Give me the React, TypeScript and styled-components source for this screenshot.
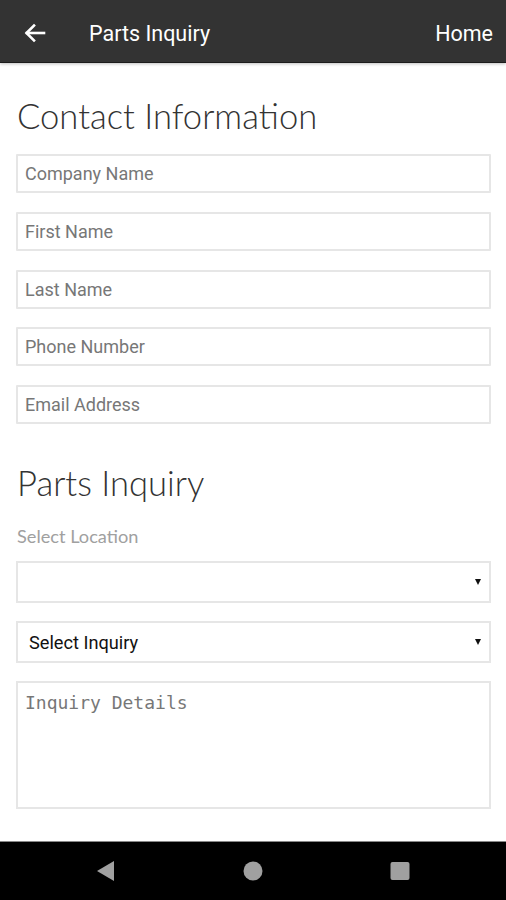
import React from "react";
import styled, { createGlobalStyle } from "styled-components";

const Global = createGlobalStyle`
  html, body { margin: 0; padding: 0; background: #fff; }
  body { width: 506px; height: 900px; overflow: hidden; font-family: Roboto, "Liberation Sans", sans-serif; }
  * { box-sizing: border-box; }
`;

const Screen = styled.div`
  width: 506px;
  height: 900px;
  display: flex;
  flex-direction: column;
  background: #fff;
`;

const TopBar = styled.header`
  height: 63px;
  flex: none;
  background: #333333;
  border-bottom: 1px solid #1c1c1c;
  box-shadow: 0 1px 3px rgba(0, 0, 0, 0.25);
  display: flex;
  align-items: center;
  padding: 4px 13px 0 22px;
  color: #fff;
  position: relative;
  z-index: 1;
`;

const BackButton = styled.span`
  display: flex;
  width: 26px;
  height: 26px;
  align-items: center;
  justify-content: center;
`;

const BarTitle = styled.span`
  margin-left: 41px;
  font-family: Roboto, sans-serif;
  font-size: 21.5px;
  font-weight: 400;
  flex: 1;
`;

const BarAction = styled.span`
  font-family: Roboto, sans-serif;
  font-size: 21.5px;
  font-weight: 400;
`;

const Content = styled.main`
  flex: 1;
  padding: 0 15px 0 16px;
  display: flex;
  flex-direction: column;
`;

const SectionTitle = styled.h1<{ $top: number }>`
  margin: ${(p) => p.$top}px 0 0 1px;
  font-family: Lato, sans-serif;
  font-weight: 300;
  font-size: 34.6px;
  line-height: 42px;
  color: #333;
`;

const FieldStack = styled.div<{ $gap: number; $top: number }>`
  display: flex;
  flex-direction: column;
  gap: ${(p) => p.$gap}px;
  margin-top: ${(p) => p.$top}px;
`;

const TextInput = styled.input`
  height: 39px;
  width: 100%;
  border: 2px solid #e6e6e6;
  border-radius: 1px;
  padding: 0 7px;
  font-family: Roboto, sans-serif;
  font-size: 18px;
  color: #333;
  background: #fff;
  outline: none;
  &::placeholder { color: #777; }
`;

const Label = styled.div`
  margin: 21px 0 0 1px;
  font-family: Lato, sans-serif;
  font-size: 18.2px;
  color: #a0a0a0;
`;

const SelectBox = styled.div`
  height: 42px;
  border: 2px solid #e6e6e6;
  display: flex;
  align-items: center;
  padding: 0 8px 0 11px;
  font-family: Roboto, sans-serif;
  font-size: 18.2px;
  color: #111;
`;

const SelectText = styled.span`
  flex: 1;
`;

const Caret = styled.span`
  width: 0;
  height: 0;
  border-left: 3.5px solid transparent;
  border-right: 3.5px solid transparent;
  border-top: 6px solid #111;
`;

const TextArea = styled.textarea`
  height: 128px;
  width: 100%;
  resize: none;
  border: 2px solid #e6e6e6;
  padding: 9px 7px;
  font-family: "DejaVu Sans Mono", "Liberation Mono", monospace;
  font-size: 18px;
  background: #fff;
  outline: none;
  &::placeholder { color: #777; }
`;

const NavBar = styled.nav`
  height: 59px;
  flex: none;
  background: #000;
  border-top: 1px solid #888;
  display: flex;
  align-items: center;
  justify-content: center;
  gap: 107px;
`;

const NavSlot = styled.span`
  width: 40px;
  display: flex;
  justify-content: center;
`;

export default function App() {
  return (
    <Screen>
      <Global />
      <TopBar>
        <BackButton>
          <svg width="22" height="20" viewBox="0 0 22 20" fill="none" stroke="#fff" strokeWidth="2.6" strokeLinecap="square">
            <path d="M20 10H3" />
            <path d="M10 2.5L2.5 10L10 17.5" />
          </svg>
        </BackButton>
        <BarTitle>Parts Inquiry</BarTitle>
        <BarAction>Home</BarAction>
      </TopBar>
      <Content>
        <SectionTitle $top={32}>Contact Information</SectionTitle>
        <FieldStack $gap={18.75} $top={17}>
          <TextInput placeholder="Company Name" />
          <TextInput placeholder="First Name" />
          <TextInput placeholder="Last Name" />
          <TextInput placeholder="Phone Number" />
          <TextInput placeholder="Email Address" />
        </FieldStack>
        <SectionTitle $top={38}>Parts Inquiry</SectionTitle>
        <Label>Select Location</Label>
        <FieldStack $gap={18} $top={14}>
          <SelectBox>
            <SelectText></SelectText>
            <Caret />
          </SelectBox>
          <SelectBox>
            <SelectText>Select Inquiry</SelectText>
            <Caret />
          </SelectBox>
          <TextArea placeholder="Inquiry Details" />
        </FieldStack>
      </Content>
      <NavBar>
        <NavSlot>
          <svg width="20" height="22" viewBox="0 0 20 22"><path d="M18 1L1 11L18 21Z" fill="#a0a0a0" /></svg>
        </NavSlot>
        <NavSlot>
          <svg width="20" height="20" viewBox="0 0 20 20"><circle cx="10" cy="10" r="9.5" fill="#a0a0a0" /></svg>
        </NavSlot>
        <NavSlot>
          <svg width="20" height="20" viewBox="0 0 20 20"><rect x="0.5" y="1" width="19" height="18" rx="2" fill="#a0a0a0" /></svg>
        </NavSlot>
      </NavBar>
    </Screen>
  );
}
